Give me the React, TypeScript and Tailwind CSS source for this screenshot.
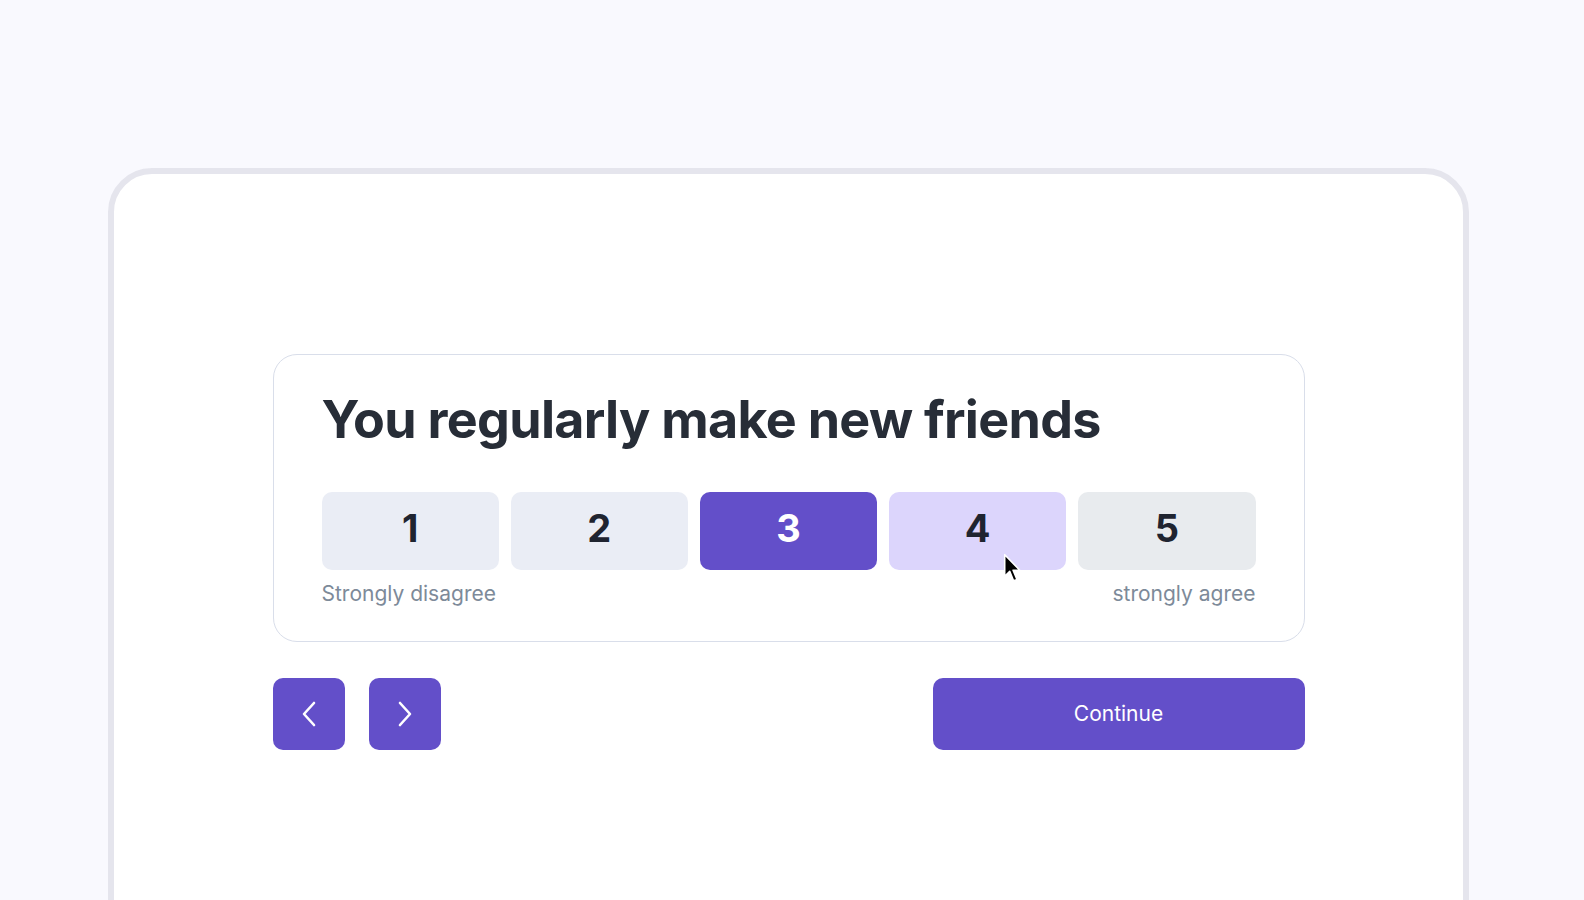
import React from 'react';

const scale = [1, 2, 3, 4, 5];

function Chevron({ dir }: { dir: 'left' | 'right' }) {
  return (
    <svg width="16" height="26" viewBox="0 0 16 26" fill="none" stroke="white" strokeWidth="2.6" strokeLinecap="round" strokeLinejoin="round">
      {dir === 'left' ? <path d="M13 2L3 13l10 11" /> : <path d="M3 2l10 11L3 24" />}
    </svg>
  );
}

function App() {
  const selected = 3;
  const hovered = 4;

  return (
    <div className="h-[900px] overflow-hidden bg-[#f9f9fe] pl-[108px] pt-[168px]">
      <div className="h-[800px] w-[1361px] rounded-[44px] border-[6px] border-[#e5e5ed] bg-white pt-[180px]">
        <div className="mx-auto w-[1032px]">
          <div className="rounded-[24px] border border-[#d9deea] px-12 pb-[31px] pt-[33px]">
            <h1 className="font-['Inter',sans-serif] text-[52px] font-bold leading-[64px] tracking-[-0.7px] text-[#272d37]">
              You regularly make new friends
            </h1>
            <div className="relative mt-[40px] flex gap-3">
              {scale.map((n) => (
                <button
                  key={n}
                  className={
                    'flex h-[78px] flex-1 items-center justify-center rounded-[10px] pb-[6px] font-[\'Inter\',sans-serif] text-[38px] font-bold ' +
                    (n === selected
                      ? 'bg-[#634fc9] text-white'
                      : n === hovered
                      ? 'bg-[#dcd5fc] text-[#1f2430]'
                      : n === 5
                      ? 'bg-[#e8ebee] text-[#1f2430]'
                      : 'bg-[#eaedf5] text-[#1f2430]')
                  }
                >
                  {n}
                </button>
              ))}
              <svg className="absolute left-[681px] top-[61px]" width="19" height="30" viewBox="0 0 17 27">
                <path d="M1.5 1.5 L1.5 21 L6 16.5 L9.5 25 L12.5 23.8 L9 15.5 L15 15.5 Z" fill="black" stroke="white" strokeWidth="1.4" strokeLinejoin="round" />
              </svg>
            </div>
            <div className="mt-2 flex justify-between font-['Inter',sans-serif] text-[21px] text-[#7d8a99]">
              <span>Strongly disagree</span>
              <span>strongly agree</span>
            </div>
          </div>
          <div className="mt-[36px] flex items-center">
            <button className="flex h-[72px] w-[72px] items-center justify-center rounded-[10px] bg-[#634fc9]">
              <Chevron dir="left" />
            </button>
            <button className="ml-6 flex h-[72px] w-[72px] items-center justify-center rounded-[10px] bg-[#634fc9]">
              <Chevron dir="right" />
            </button>
            <button className="ml-auto h-[72px] w-[372px] rounded-[10px] bg-[#634fc9] font-['Inter',sans-serif] text-[21px] font-normal text-white">
              Continue
            </button>
          </div>
        </div>
      </div>
    </div>
  );
}

export default App;
